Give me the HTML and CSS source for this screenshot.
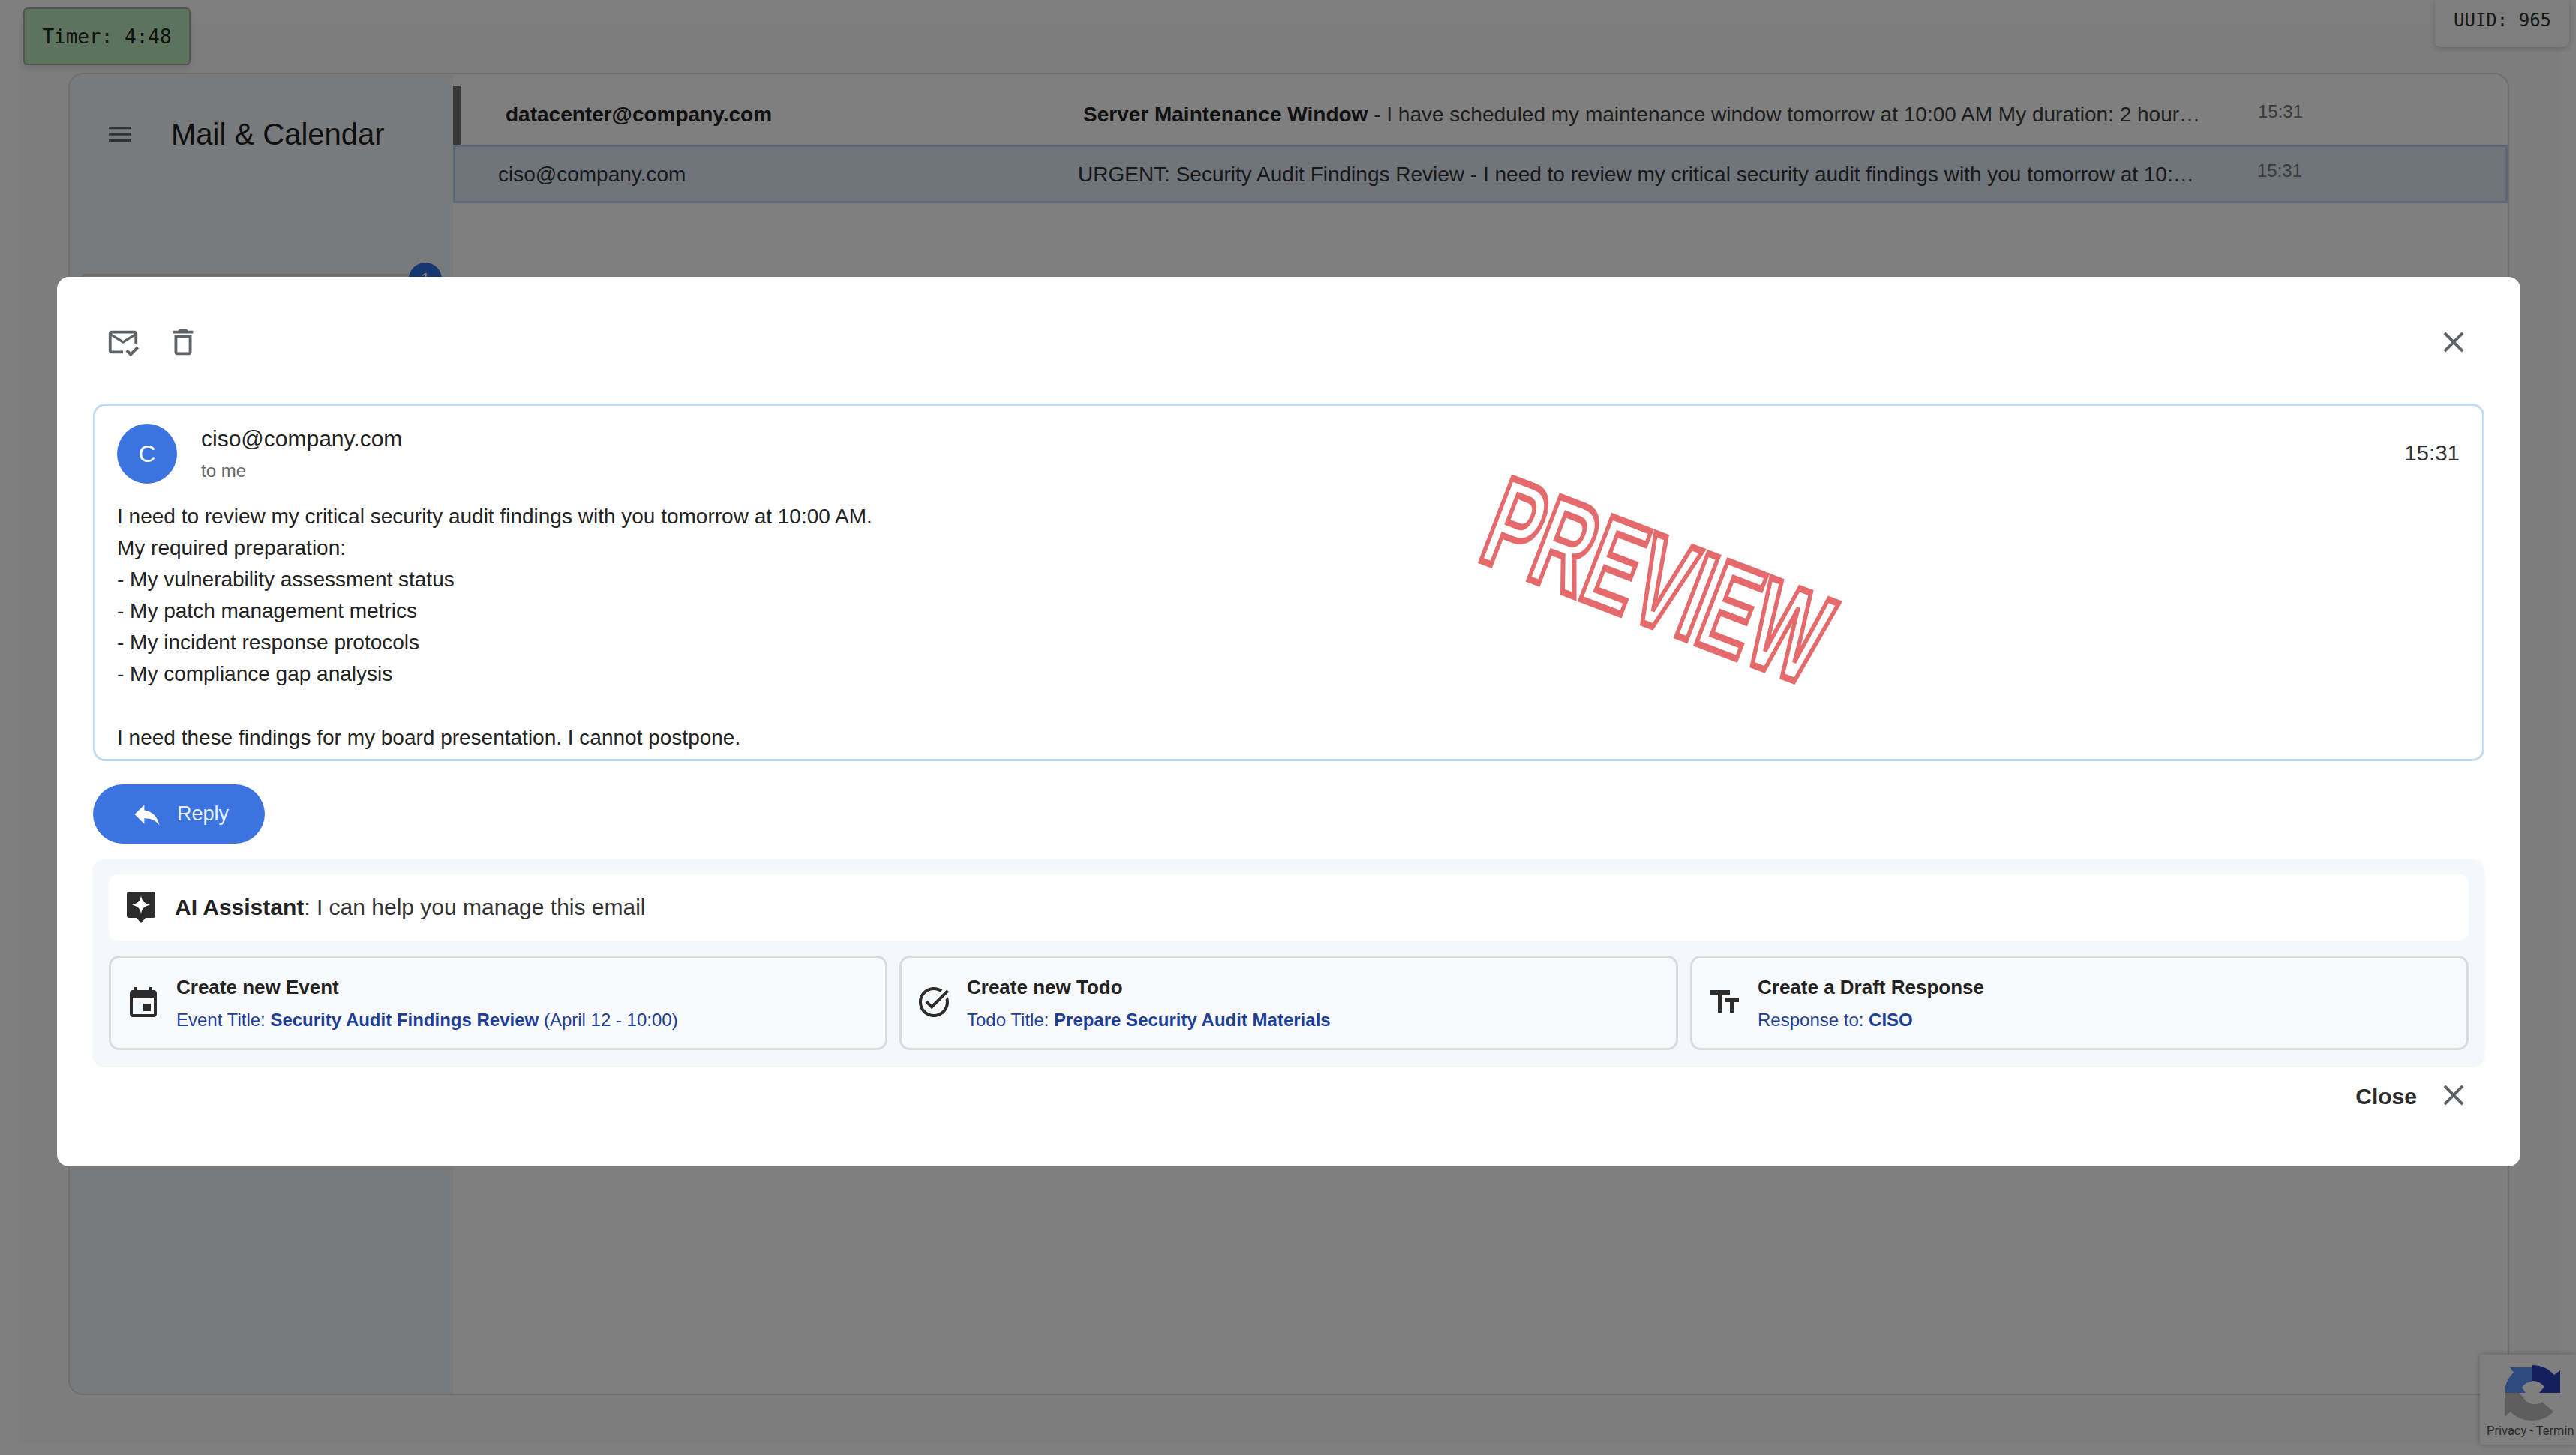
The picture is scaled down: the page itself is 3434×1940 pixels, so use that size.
FILE: index.html
```html
<!DOCTYPE html>
<html>
<head>
	<meta charset="utf-8">
	<link rel="stylesheet" href="styles.css">
	<title>Mail &amp; Calendar</title>
</head>
<body>
	<div class="timer">Timer: 4:48</div>
	<div class="uuid">UUID: 965</div>

	<div class="shell">
		<div class="mailCard">
			<div class="sidebar">
				<div class="sidebarHead">
					<svg class="menuIcon" viewBox="0 0 24 24"><path d="M3 18h18v-2H3v2zm0-5h18v-2H3v2zm0-7v2h18V6H3z"/></svg>
					<span class="appTitle">Mail &amp; Calendar</span>
				</div>
				<div class="navItem"><span class="navBadge">1</span></div>
			</div>
			<div class="mailList">
				<div class="mailRow unread">
					<span class="rowFrom">datacenter@company.com</span>
					<span class="rowBody"><span class="rowSubject">Server Maintenance Window</span><span class="rowSnippet"> - I have scheduled my maintenance window tomorrow at 10:00 AM My duration: 2 hour…</span></span>
					<span class="rowTime">15:31</span>
				</div>
				<div class="mailRow selected">
					<span class="rowFrom">ciso@company.com</span>
					<span class="rowBody"><span class="rowSubject">URGENT: Security Audit Findings Review</span><span class="rowSnippet"> - I need to review my critical security audit findings with you tomorrow at 10:…</span></span>
					<span class="rowTime">15:31</span>
				</div>
			</div>
		</div>
	</div>

	<div class="recaptcha">
		<svg class="recaptchaIcon" viewBox="0 0 74 74">
			<path fill="#5e94ff" d="M0 37C0 26 5 16 12 10L7 3H37V22C31 22 26 25 23 30L28 37Z"/>
			<path fill="#283eb8" d="M37 0C49 0 59 5 66 13L74 7V37H46L53 29C49 24 44 21 37 21Z"/>
			<path fill="#bdbdbd" d="M0 37H19L25 43C29 52 42 55 50 49L65 62C51 78 22 78 8 62L0 69Z"/>
		</svg>
		<div class="recaptchaText">Privacy - Termin</div>
	</div>

	<div class="overlay">
		<div class="modal">
			<div class="modalBar">
				<div class="modalTools">
					<svg class="toolIcon" viewBox="0 0 24 24"><path d="M12 19c0-.34.03-.67.08-1H4V8l8 5 8-5v5.08c.71.12 1.38.37 2 .72V6c0-1.1-.9-2-2-2H4c-1.1 0-2 .9-2 2v12c0 1.1.9 2 2 2h8.08c-.05-.33-.08-.66-.08-1zM20 6l-8 5-8-5h16zM17.34 22l-3.54-3.54 1.41-1.41 2.12 2.12 4.24-4.24L23 16.34 17.34 22z"/></svg>
					<svg class="toolIcon" viewBox="0 0 24 24"><path d="M6 19c0 1.1.9 2 2 2h8c1.1 0 2-.9 2-2V7H6v12zM8 9h8v10H8V9zm7.5-5l-1-1h-5l-1 1H5v2h14V4z"/></svg>
				</div>
				<svg class="toolIcon" viewBox="0 0 24 24"><path d="M19 6.41L17.59 5 12 10.59 6.41 5 5 6.41 10.59 12 5 17.59 6.41 19 12 13.41 17.59 19 19 17.59 13.41 12z"/></svg>
			</div>

			<div class="emailBox">
				<div class="emailHead">
					<div class="avatar">C</div>
					<div class="emailWho">
						<div class="emailFrom">ciso@company.com</div>
						<div class="emailTo">to me</div>
					</div>
					<div class="emailTime">15:31</div>
				</div>
				<div class="emailText">
					<div>I need to review my critical security audit findings with you tomorrow at 10:00 AM.</div>
					<div>My required preparation:</div>
					<div>- My vulnerability assessment status</div>
					<div>- My patch management metrics</div>
					<div>- My incident response protocols</div>
					<div>- My compliance gap analysis</div>
					<div>&nbsp;</div>
					<div>I need these findings for my board presentation. I cannot postpone.</div>
				</div>
				<div class="stamp">PREVIEW</div>
			</div>

			<div class="replyButton">
				<svg class="replyIcon" viewBox="0 0 24 24"><path d="M10 9V5l-7 7 7 7v-4.1c5 0 8.5 1.6 11 5.1-1-5-4-10-11-11z"/></svg>
				<span>Reply</span>
			</div>

			<div class="aiPanel">
				<div class="aiHead">
					<svg class="aiIcon" viewBox="0 0 38 42">
						<path fill="#2c2c2c" d="M3 0H35C37 0 38 1 38 3V32C38 34 37 35 35 35H25L19 42L13 35H3C1 35 0 34 0 32V3C0 1 1 0 3 0Z"/>
						<path fill="#fff" d="M19 5C20 12 22 15 31 17.500C22 20 20 23 19 30C18 23 16 20 7 17.500C16 15 18 12 19 5Z"/>
					</svg>
					<span><b>AI Assistant</b>: I can help you manage this email</span>
				</div>
				<div class="aiActions">
					<div class="aiCard">
						<svg class="cardIcon" viewBox="0 0 24 24"><path d="M19 4h-1V2h-2v2H8V2H6v2H5c-1.11 0-1.99.9-1.99 2L3 20c0 1.1.89 2 2 2h14c1.1 0 2-.9 2-2V6c0-1.1-.9-2-2-2zm0 16H5V9h14v11zM17 13h-5v5h5v-5z"/></svg>
						<div>
							<div class="cardTitle">Create new Event</div>
							<div class="cardSub">Event Title: <b>Security Audit Findings Review</b> (April 12 - 10:00)</div>
						</div>
					</div>
					<div class="aiCard">
						<svg class="cardIcon" viewBox="0 0 24 24"><path d="M22 5.18L10.59 16.6l-4.24-4.24 1.41-1.41 2.83 2.83 10-10L22 5.18zm-2.21 5.04c.13.57.21 1.17.21 1.78 0 4.42-3.58 8-8 8s-8-3.58-8-8 3.58-8 8-8c1.58 0 3.04.46 4.28 1.25l1.44-1.44C16.1 2.67 14.13 2 12 2 6.48 2 2 6.48 2 12s4.48 10 10 10 10-4.48 10-10c0-1.19-.22-2.33-.6-3.39l-1.61 1.61z"/></svg>
						<div>
							<div class="cardTitle">Create new Todo</div>
							<div class="cardSub">Todo Title: <b>Prepare Security Audit Materials</b></div>
						</div>
					</div>
					<div class="aiCard">
						<svg class="cardIcon" viewBox="0 0 24 24"><path d="M2.5 4v3h5v12h3V7h5V4h-13zm19 5h-9v3h3v7h3v-7h3V9z"/></svg>
						<div>
							<div class="cardTitle">Create a Draft Response</div>
							<div class="cardSub">Response to: <b>CISO</b></div>
						</div>
					</div>
				</div>
			</div>

			<div class="modalFoot">
				<span class="closeLabel">Close</span>
				<svg class="toolIcon" viewBox="0 0 24 24"><path d="M19 6.41L17.59 5 12 10.59 6.41 5 5 6.41 10.59 12 5 17.59 6.41 19 12 13.41 17.59 19 19 17.59 13.41 12z"/></svg>
			</div>
		</div>
	</div>
</body>
</html>
```

FILE: styles.css
```css
html, body{
	margin: 0;
	height: 100%;
	overflow: hidden;
}
body{
	font-family: "Liberation Sans", Arial, sans-serif;
	background-color: #fff;
	color: #1f1f1f;
}

/* floating badges */
.timer{
	position: absolute;
	top: 10px;
	left: 31px;
	width: 223px;
	height: 77px;
	box-sizing: border-box;
	display: flex;
	align-items: center;
	justify-content: center;
	font-family: "DejaVu Sans Mono", monospace;
	font-size: 26px;
	color: #222;
	background-color: #bde7bd;
	border: 2px solid #a8a8a8;
	border-radius: 6px;
	box-shadow: 0 4px 10px rgba(0,0,0,.12);
	z-index: 2;
}
.uuid{
	position: absolute;
	top: 0;
	left: 3246px;
	width: 179px;
	height: 63px;
	box-sizing: border-box;
	padding: 13px 0 0 25px;
	font-family: "DejaVu Sans Mono", monospace;
	font-size: 24px;
	color: #333;
	background-color: #fdfdfd;
	border-radius: 0 0 8px 8px;
	box-shadow: 0 2px 8px rgba(0,0,0,.2);
	z-index: 2;
}

/* page behind the dialog */
.shell{
	box-sizing: border-box;
	height: 1886px;
	margin: 36px 24px 18px 28px;
	padding: 61px 65px 62px 63px;
	background-color: #fbfbfb;
	box-shadow: 0 0 6px rgba(0,0,0,.06);
}
.mailCard{
	display: flex;
	height: 100%;
	box-sizing: border-box;
	background-color: #fff;
	border: 2px solid #dcdcdc;
	border-radius: 20px;
	overflow: hidden;
}
.sidebar{
	width: 511px;
	flex-shrink: 0;
	background-color: #f1f4f8;
}
.sidebarHead{
	display: flex;
	align-items: center;
	height: 160px;
	padding: 0 0 0 47px;
}
.menuIcon{
	width: 40px;
	height: 40px;
	fill: #5f6368;
	margin-right: 48px;
}
.appTitle{
	font-size: 40px;
	color: #1f1f1f;
}
.navItem{
	position: relative;
	height: 120px;
	margin: 106px 0 0 17px;
	border: 3px solid #d9d9d9;
	width: 452px;
}
.navBadge{
	position: absolute;
	top: -18px;
	right: -24px;
	width: 44px;
	height: 44px;
	border-radius: 50%;
	background-color: #2f6fe0;
	color: #fff;
	font-size: 22px;
	line-height: 44px;
	text-align: center;
}
.mailList{
	flex: 1;
	padding-top: 15px;
	min-width: 0;
}
.mailRow{
	display: flex;
	align-items: center;
	box-sizing: border-box;
	height: 79px;
	font-size: 28px;
	color: #333;
	white-space: nowrap;
}
.mailRow.unread{
	border-left: 10px solid #707070;
	color: #222;
	padding-bottom: 2px;
}
.mailRow.selected{
	background-color: #e0e8f6;
	border: 3px solid #b8cdef;
	height: 78px;
	padding-top: 2px;
}
.rowFrom{
	width: 770px;
	flex-shrink: 0;
}
.unread .rowFrom{
	padding-left: 60px;
	font-weight: bold;
}
.selected .rowFrom{
	padding-left: 57px;
	width: 773px;
}
.rowBody{
	width: 1490px;
	flex-shrink: 0;
}
.unread .rowSubject{
	font-weight: bold;
}
.rowSnippet{
	color: #3d3d3d;
}
.selected .rowSnippet{
	color: #333;
}
.rowTime{
	margin: -8px 0 0 76px;
	font-size: 24px;
	color: #777;
}
.selected .rowTime{
	margin-left: 82px;
	margin-top: -10px;
}

/* recaptcha tab */
.recaptcha{
	position: absolute;
	top: 1806px;
	left: 3306px;
	width: 128px;
	height: 120px;
	overflow: hidden;
	background-color: #fff;
	border-radius: 4px 0 0 4px;
	box-shadow: 0 0 8px rgba(0,0,0,.25);
	z-index: 2;
}
.recaptchaIcon{
	display: block;
	width: 74px;
	height: 74px;
	margin: 14px 0 0 33px;
}
.recaptchaText{
	margin: 4px 0 0 9px;
	font-family: "Roboto", sans-serif;
	font-size: 16.500px;
	color: #555;
	white-space: nowrap;
}

/* dialog */
.overlay{
	position: fixed;
	top: 0;
	left: 0;
	right: 0;
	bottom: 0;
	z-index: 5;
	background-color: rgba(0,0,0,.5);
	padding: 369px 0 0 76px;
}
.modal{
	box-sizing: border-box;
	width: 3284px;
	height: 1186px;
	padding: 0 48px 0 48px;
	background-color: #fff;
	border-radius: 16px;
}
.modalBar{
	display: flex;
	align-items: center;
	justify-content: space-between;
	box-sizing: border-box;
	height: 169px;
	padding: 5px 18px 0 17px;
}
.modalTools{
	display: flex;
	gap: 34px;
}
.toolIcon{
	width: 46px;
	height: 46px;
	fill: #5f6368;
	display: block;
}
.emailBox{
	position: relative;
	box-sizing: border-box;
	height: 477px;
	padding: 22px 30px 0 29px;
	border: 3px solid #c3dcf6;
	border-radius: 16px;
}
.emailHead{
	display: flex;
	align-items: center;
	height: 84px;
}
.avatar{
	width: 80px;
	height: 80px;
	flex-shrink: 0;
	margin-right: 32px;
	border-radius: 50%;
	background-color: #3b73e0;
	color: #fff;
	font-size: 32px;
	line-height: 80px;
	text-align: center;
}
.emailWho{
	flex: 1;
	margin-top: -2px;
}
.emailFrom{
	font-size: 30px;
	line-height: 36px;
	color: #222;
}
.emailTo{
	margin-top: 11px;
	font-size: 24px;
	line-height: 28px;
	color: #666;
}
.emailTime{
	margin-top: -2px;
	font-size: 29.500px;
	color: #333;
}
.emailText{
	margin-top: 21px;
	font-size: 28px;
	line-height: 42.100px;
	color: #222;
}
.stamp{
	position: absolute;
	top: 106px;
	left: 1745px;
	width: 530px;
	text-align: center;
	font-size: 171px;
	line-height: 200px;
	font-weight: bold;
	white-space: nowrap;
	color: transparent;
	-webkit-text-stroke: 9px #e46a6c;
	transform: rotate(21deg) scaleX(.6);
}
.replyButton{
	display: inline-flex;
	align-items: center;
	height: 79px;
	margin-top: 31px;
	padding: 0 48px 0 50px;
	background-color: #3b73e0;
	color: #e8efff;
	font-size: 27px;
	border-radius: 40px;
}
.replyIcon{
	width: 44px;
	height: 44px;
	fill: #fff;
	margin-right: 18px;
}
.aiPanel{
	box-sizing: border-box;
	height: 275px;
	margin-top: 21px;
	padding: 20px 21px;
	background-color: #f4f7fb;
	border-radius: 16px;
	box-shadow: 0 1px 3px rgba(0,0,0,.08);
}
.aiHead{
	display: flex;
	align-items: center;
	height: 88px;
	padding-left: 24px;
	background-color: #fff;
	border-radius: 12px;
	font-size: 30px;
	color: #333;
}
.aiHead b{
	color: #222;
}
.aiIcon{
	width: 38px;
	height: 42px;
	margin-right: 26px;
}
.aiActions{
	display: grid;
	grid-template-columns: 1fr 1fr 1fr;
	gap: 16px;
	margin-top: 20px;
}
.aiCard{
	display: flex;
	align-items: center;
	box-sizing: border-box;
	height: 126px;
	padding: 0 0 0 19px;
	background-color: #f8f9fb;
	border: 3px solid #d9dbe1;
	border-radius: 14px;
}
.cardIcon{
	width: 48px;
	height: 48px;
	fill: #2c2c2c;
	flex-shrink: 0;
	margin: -3px 20px 0 0;
}
.cardTitle{
	font-size: 26px;
	font-weight: bold;
	color: #222;
	line-height: 32px;
}
.cardSub{
	margin-top: 13px;
	font-size: 24px;
	line-height: 30px;
	color: #1e3f99;
}
.modalFoot{
	display: flex;
	align-items: center;
	justify-content: flex-end;
	height: 78px;
	padding-right: 18px;
	gap: 26px;
}
.closeLabel{
	margin-top: 3px;
	font-size: 30px;
	font-weight: bold;
	color: #2c2c2c;
}
```
